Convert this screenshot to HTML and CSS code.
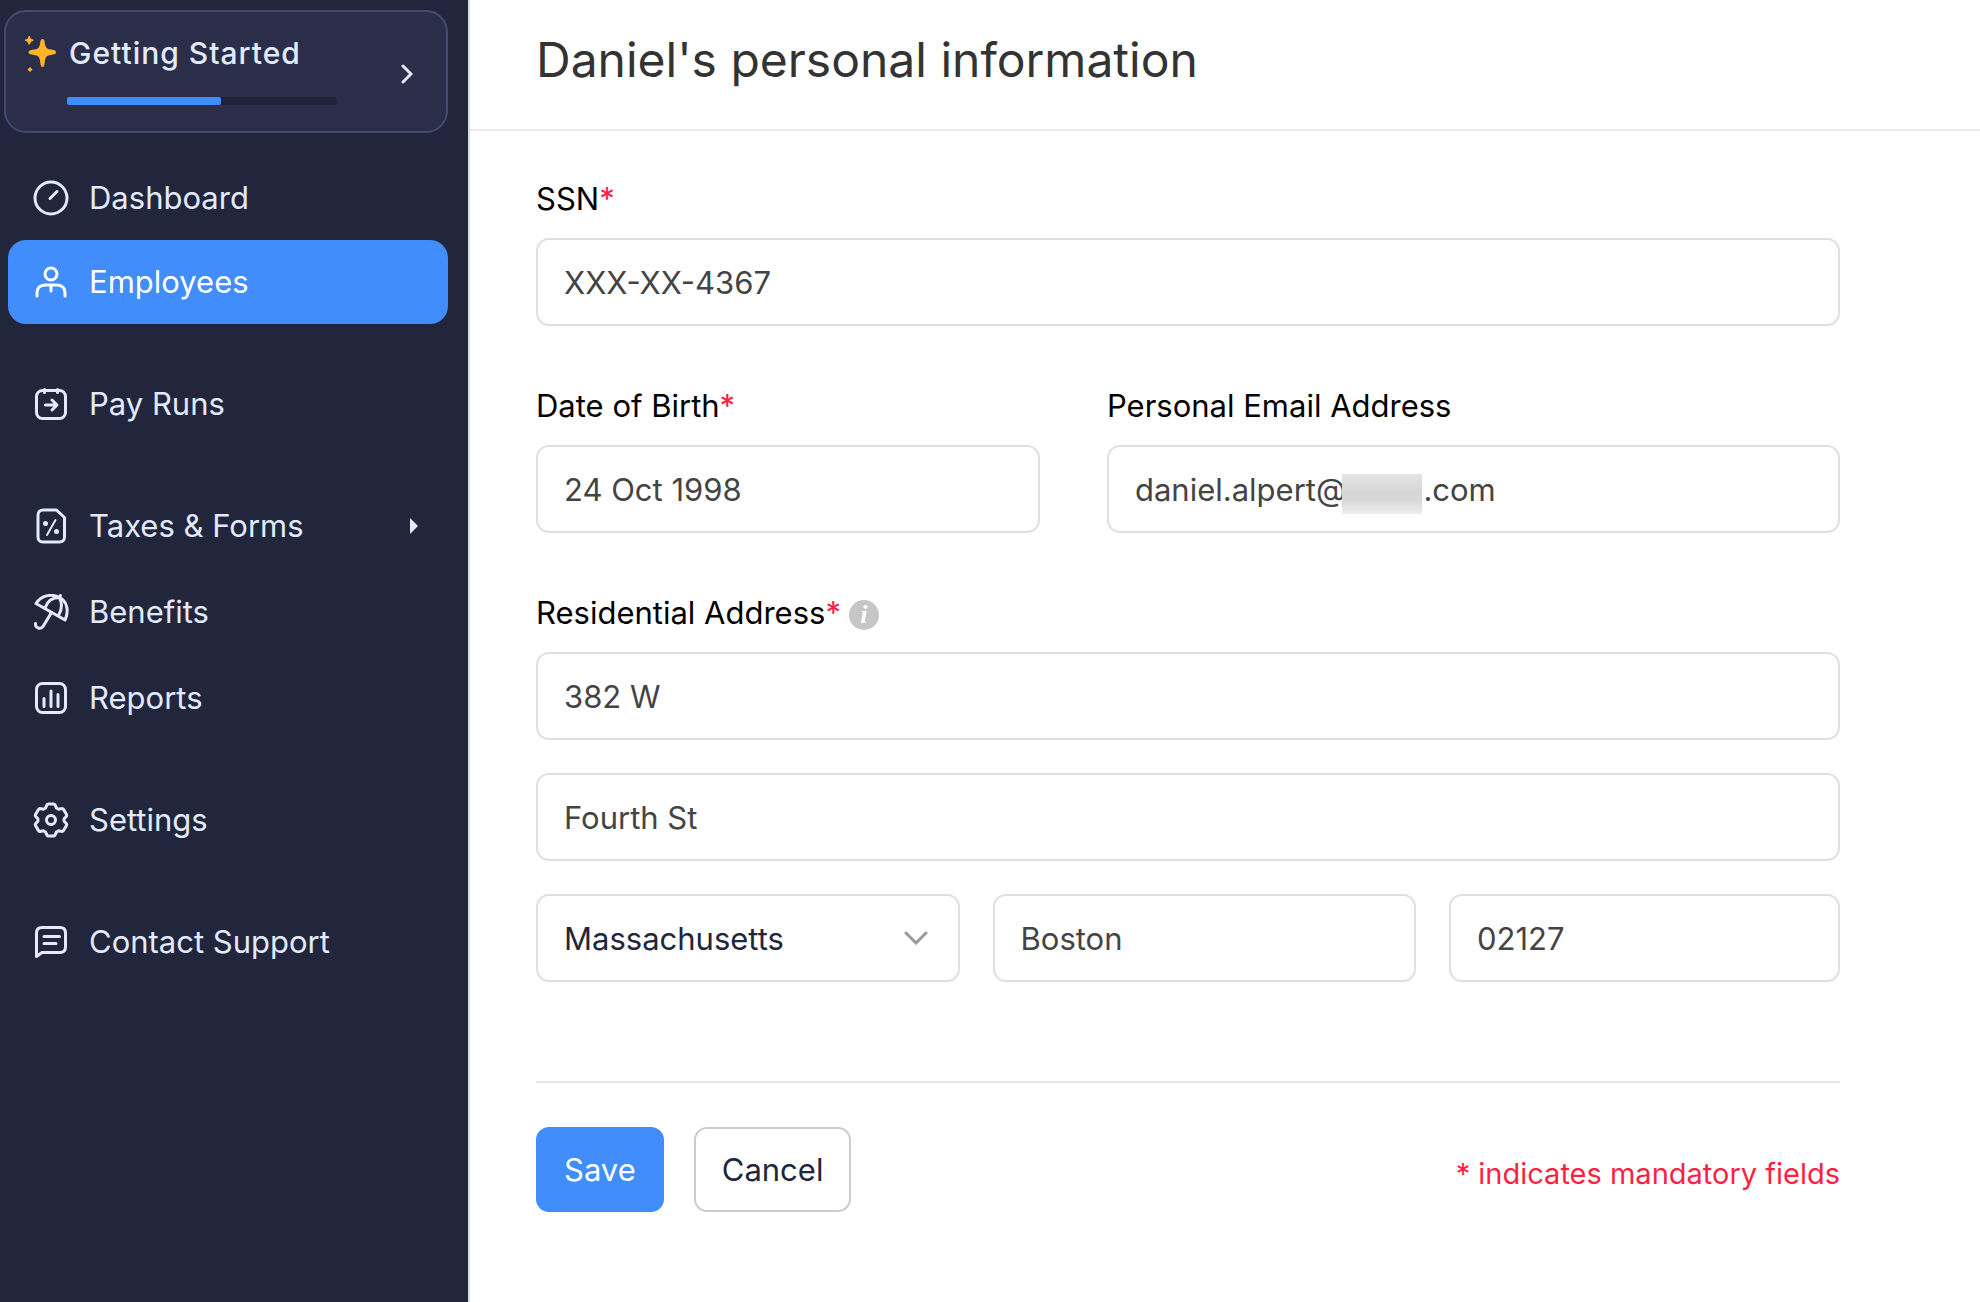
FILE: index.html
```
<!DOCTYPE html>
<html lang="en">
    <head>
        <meta charset="UTF-8">
        <meta name="viewport" content="width=device-width, initial-scale=1.0">
        <title>Daniel's personal information</title>

        <link rel="stylesheet" href="styles.css">
    </head>
    <body>

        <aside class="sidebar">
            <a class="getting-started" href="#">
                <svg class="sparkle" viewBox="0 0 32 36" aria-hidden="true">
                    <path d="M17.500 3c1.500 0 2 1.500 2.300 4 .6 4.500 2 6 6 6.500 2.800.4 5.200.900 5.200 2.700s-2.400 2.300-5.200 2.700c-4 .5-5.400 2-6 6.500-.3 3-.8 5.600-2.300 5.600s-2-2.600-2.300-5.600c-.6-4.500-2-6-6-6.500-2.800-.4-5.700-.9-5.700-2.700s2.900-2.300 5.700-2.700c4-.5 5.400-2 6-6.500.3-2.500.8-4 2.300-4z"/>
                    <path d="M4.200 0c1.200 0 1.200 2.500 1.600 2.800s2.700.3 2.700 1.500-2.300 1.200-2.700 1.600-.4 2.600-1.600 2.600-1.200-2.200-1.600-2.600S0 5.500 0 4.300s2.200-1.200 2.600-1.500S3 0 4.200 0z"/>
                    <path d="M5 31l1.200 1.300L7.500 33.500 6.200 34.700 5 36 3.800 34.700 2.500 33.500 3.800 32.300z"/>
                </svg>
                <div class="getting-started-body">
                    <span class="getting-started-title">Getting Started</span>
                    <div class="progress"><div class="progress-bar" style="width: 57%"></div></div>
                </div>
                <svg class="chevron" viewBox="0 0 12 20" aria-hidden="true"><path d="M2 2l8 8-8 8"/></svg>
            </a>

            <nav class="nav">
                <div class="nav-group nav-group-tight">
                    <a class="nav-item" href="#">
                        <svg class="icon" viewBox="0 0 36 36"><circle cx="18" cy="18" r="16"/><path d="M17 18.500l7-7"/></svg>
                        Dashboard
                    </a>
                    <a class="nav-item active" href="#">
                        <svg class="icon" viewBox="0 0 36 36"><circle cx="18" cy="10" r="6"/><path d="M4 32v-3c0-5 3-8 8-8h12c5 0 8 3 8 8v3M18 21v6"/></svg>
                        Employees
                    </a>
                </div>
                <div class="nav-group">
                    <a class="nav-item" href="#">
                        <svg class="icon" viewBox="0 0 36 36"><rect x="3.500" y="4.500" width="29" height="28" rx="6"/><path d="M11.500 3.500v3M24.500 3.500v3M12.500 19h11M19 14l5 5-5 5"/></svg>
                        Pay Runs
                    </a>
                </div>
                <div class="nav-group">
                    <a class="nav-item" href="#">
                        <svg class="icon" viewBox="0 0 36 36"><path d="M10 2h13.500l8 7.500V29c0 3-2 5-5 5H10c-3 0-5-2-5-5V7c0-3 2-5 5-5z"/><path class="thin" d="M22.500 12L14 27"/><circle class="dot" cx="12.500" cy="15.500" r="2.500"/><circle class="dot" cx="23.500" cy="23.500" r="2.500"/></svg>
                        Taxes &amp; Forms
                        <span class="caret"></span>
                    </a>
                    <a class="nav-item" href="#">
                        <svg class="icon" viewBox="0 0 36 36"><path d="M3 9.500C9 0 20 0 26.500 3.500c8 4 9.500 14 5.500 22.500z"/><path d="M12 14c2-6 7-10.500 14.500-10.500 3 6 2.500 12-1 18M26.500 3.500l1-2M18.500 18.500L10 32.500c-3 3.500-8 1-7.500-3"/></svg>
                        Benefits
                    </a>
                    <a class="nav-item" href="#">
                        <svg class="icon" viewBox="0 0 36 36"><rect x="3.500" y="3.500" width="29" height="29" rx="6"/><path d="M11 18.500v8M18 11v15.500M25 14.500v12"/></svg>
                        Reports
                    </a>
                </div>
                <div class="nav-group">
                    <a class="nav-item" href="#">
                        <svg class="icon" viewBox="0 0 36 36"><path d="M12.500 6 14 2.800Q14.500 2 15.500 2h5q1 0 1.500.8L23.500 6l2.100 1.200 3.400-.6q1 0 1.500.8l3 5q.5 1 0 1.800l-2.400 2.600v2.400l2.400 2.600q.5.800 0 1.800l-3 5q-.5.800-1.500.8l-3.400-.6L23.500 30 22 33.200q-.5.800-1.500.8h-5q-1 0-1.500-.8L12.500 30l-2.100-1.200-3.400.6q-1 0-1.500-.8l-3-5q-.5-1 0-1.800l2.400-2.600v-2.400l-2.400-2.600q-.5-.8 0-1.800l3-5q.5-.8 1.500-.8l3.400.6z"/><circle cx="18" cy="18" r="4.500"/></svg>
                        Settings
                    </a>
                </div>
                <div class="nav-group">
                    <a class="nav-item" href="#">
                        <svg class="icon" viewBox="0 0 36 36"><path d="M3.500 32.500V9c0-3.500 2-5.500 5.500-5.500h18c3.500 0 5.500 2 5.500 5.500v14c0 3.500-2 5.500-5.500 5.500H9z"/><path d="M11 12.500h15.500M11 19.500h12"/></svg>
                        Contact Support
                    </a>
                </div>
            </nav>
        </aside>

        <main class="main">
            <header class="page-header">
                <h1>Daniel's personal information</h1>
            </header>

            <form class="form">
                <div class="field">
                    <label for="ssn">SSN<span class="required">*</span></label>
                    <input type="text" id="ssn" value="XXX-XX-4367">
                </div>

                <div class="row row-contact">
                    <div class="field">
                        <label for="dob">Date of Birth<span class="required">*</span></label>
                        <input type="text" id="dob" value="24 Oct 1998">
                    </div>
                    <div class="field">
                        <label for="email">Personal Email Address</label>
                        <div class="control">
                            <input type="text" id="email" value="daniel.alpert@&emsp;&emsp;&ensp;.com">
                            <span class="redacted"></span>
                        </div>
                    </div>
                </div>

                <div class="field">
                    <label for="address1">Residential Address<span class="required">*</span><span class="info">i</span></label>
                    <div class="address">
                        <input type="text" id="address1" value="382 W">
                        <input type="text" id="address2" aria-label="Address line 2" value="Fourth St">
                        <div class="row row-city">
                            <div class="control">
                                <select id="state" aria-label="State">
                                    <option>Massachusetts</option>
                                </select>
                                <svg class="select-arrow" viewBox="0 0 24 14" aria-hidden="true"><path d="M2 2l10 10L22 2"/></svg>
                            </div>
                            <input type="text" id="city" aria-label="City" value="Boston">
                            <input type="text" id="zip" aria-label="Zip code" value="02127">
                        </div>
                    </div>
                </div>

                <div class="form-footer">
                    <button type="submit" class="btn btn-primary">Save</button>
                    <button type="button" class="btn">Cancel</button>
                    <p class="mandatory">* indicates mandatory fields</p>
                </div>
            </form>
        </main>

    </body>
</html>
```
FILE: styles.css
```
*{
    box-sizing: border-box;
}

body{
    margin: 0;
    min-height: 100vh;
    display: flex;
    font-family: Inter, 'Helvetica Neue', sans-serif;
    font-size: 31px;
    line-height: 40px;
    color: #000;
    background: #fff;
}

a{
    color: inherit;
    text-decoration: none;
}

/* sidebar */
.sidebar{
    flex: none;
    width: 470px;
    padding: 10px 20px 40px 4px;
    background: #21263c;
    border-right: 2px solid #dcdcdc;
    color: #e2eafc;
}

.getting-started{
    display: flex;
    height: 123px;
    padding: 21px 33px 0 19px;
    background: #2b2e49;
    border: 2px solid #444a72;
    border-radius: 22px;
}

.sparkle{
    width: 32px;
    height: 36px;
    margin-top: 3px;
    fill: #ffb427;
}

.getting-started-body{
    width: 270px;
    margin-left: 10px;
}

.getting-started-title{
    display: block;
    margin-left: 2px;
    font-size: 30px;
    font-weight: 500;
    letter-spacing: 1px;
}

.progress{
    height: 8px;
    margin-top: 24px;
    border-radius: 2px;
    background: #1f2438;
}

.progress-bar{
    height: 8px;
    border-radius: 2px;
    background: #408dfb;
}

.chevron{
    width: 12px;
    height: 20px;
    margin: 31px 0 0 auto;
    fill: none;
    stroke: #e2eafc;
    stroke-width: 3;
    stroke-linecap: round;
}

.nav{
    display: flex;
    flex-direction: column;
    gap: 38px;
    margin: 23px 0 0 4px;
}

.nav-group{
    display: flex;
    flex-direction: column;
    gap: 2px;
}

.nav-group-tight{
    gap: 0;
}

.nav-item{
    display: flex;
    align-items: center;
    gap: 20px;
    height: 84px;
    padding: 0 30px 0 25px;
    border-radius: 18px;
}

.nav-item.active{
    background: #408dfb;
    color: #fff;
}

.icon{
    flex: none;
    width: 36px;
    height: 36px;
    fill: none;
    stroke: currentColor;
    stroke-width: 3;
    stroke-linecap: round;
    stroke-linejoin: round;
}

.icon .thin{
    stroke-width: 2;
}

.icon .dot{
    fill: currentColor;
    stroke: none;
}

.caret{
    margin-left: auto;
    border: 8px solid transparent;
    border-left-color: currentColor;
    border-right-width: 0;
}

/* page */
.main{
    flex: 1;
    min-width: 0;
}

.page-header{
    padding: 30px 66px 39px;
    border-bottom: 2px solid #ebebeb;
}

h1{
    margin: 0;
    font-size: 48px;
    line-height: 60px;
    font-weight: 400;
    color: #333;
}

.form{
    display: flex;
    flex-direction: column;
    gap: 60px;
    padding: 48px 140px 60px 66px;
}

.row{
    display: grid;
}

.row-contact{
    grid-template-columns: 11fr 16fr;
    gap: 67px;
}

.row-city{
    grid-template-columns: 13fr 13fr 12fr;
    gap: 33px;
}

.address{
    display: grid;
    gap: 33px;
}

label{
    display: flex;
    align-items: center;
    margin-bottom: 19px;
}

.required{
    color: #ff1f44;
}

.info{
    width: 30px;
    height: 30px;
    margin: 4px 0 0 8px;
    border-radius: 50%;
    background: #c6c6c6;
    color: #fff;
    font: italic bold 26px/30px 'Liberation Serif', serif;
    text-align: center;
}

.control{
    position: relative;
}

input, select{
    display: block;
    width: 100%;
    height: 88px;
    padding: 0 26px;
    border: 2px solid #dfdfe7;
    border-radius: 13px;
    background: #fff;
    color: #444;
    font: inherit;
}

select{
    padding-top: 2px;
    appearance: none;
    color: #21263c;
}

.select-arrow{
    position: absolute;
    right: 32px;
    top: 37px;
    width: 24px;
    height: 14px;
    fill: none;
    stroke: #999;
    stroke-width: 3;
    stroke-linecap: round;
    pointer-events: none;
}

.redacted{
    position: absolute;
    left: 235px;
    top: 29px;
    width: 80px;
    height: 40px;
    background: linear-gradient(#e4e4e4, #d6d6d6 45%, #d8d8d8 65%, #eee);
}

.form-footer{
    display: flex;
    align-items: center;
    gap: 30px;
    margin-top: 39px;
    padding-top: 44px;
    border-top: 2px solid #e6e6e6;
}

.btn{
    height: 85px;
    padding: 0 26px;
    border: 2px solid #ccc;
    border-radius: 13px;
    background: #fff;
    color: #21263c;
    font: inherit;
}

.btn-primary{
    border-color: #408dfb;
    background: #408dfb;
    color: #fff;
}

.mandatory{
    margin: 9px 0 0 auto;
    font-size: 29px;
    color: #ff1f44;
}
```
